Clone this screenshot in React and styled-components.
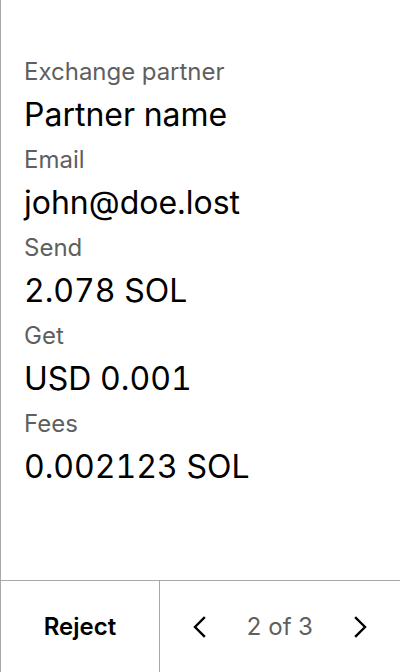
import React from "react";
import styled, { createGlobalStyle } from "styled-components";

const Global = createGlobalStyle`
  html, body { margin: 0; padding: 0; background: #fff; }
  body { font-family: Inter, "Noto Sans", sans-serif; -webkit-font-smoothing: antialiased; font-variant-numeric: tabular-nums; }
`;

const Screen = styled.div`
  width: 400px;
  height: 672px;
  box-sizing: border-box;
  border-left: 1px solid #a8a8a8;
  display: flex;
  flex-direction: column;
  background: #fff;
`;

const Details = styled.dl`
  flex: 1;
  margin: 0;
  padding: 56px 23px 0;
  display: flex;
  flex-direction: column;
  gap: 6px;
`;

const Field = styled.div`
  display: flex;
  flex-direction: column;
`;

const Label = styled.dt`
  font-size: 24px;
  line-height: 32px;
  color: #5f5f5f;
  margin: 0;
`;

const Value = styled.dd`
  font-size: 32px;
  line-height: 46px;
  color: #000;
  margin: 4px 0 0;
`;

const Footer = styled.div`
  height: 92px;
  border-top: 1px solid #a8a8a8;
  display: flex;
  box-sizing: border-box;
`;

const RejectButton = styled.button`
  width: 159px;
  border: none;
  border-right: 1px solid #a8a8a8;
  background: none;
  font-family: inherit;
  font-size: 24px;
  font-weight: 600;
  color: #000;
  padding: 0;
  cursor: pointer;
`;

const Pager = styled.div`
  flex: 1;
  display: flex;
  align-items: center;
  justify-content: space-between;
  padding: 0 16px;
`;

const NavButton = styled.button`
  width: 48px;
  height: 48px;
  border: none;
  background: none;
  padding: 0;
  display: flex;
  align-items: center;
  justify-content: center;
  color: #000;
  cursor: pointer;
`;

const PageText = styled.span`
  font-size: 24px;
  color: #5f5f5f;
`;

const Chevron = ({ dir }) => (
  <svg width="24" height="24" viewBox="0 0 24 24" fill="none" stroke="currentColor" strokeWidth="2.4" strokeLinecap="square" strokeLinejoin="miter">
    {dir === "left" ? <path d="M16 3 L7 12 L16 21" /> : <path d="M8 3 L17 12 L8 21" />}
  </svg>
);

const rows = [
  ["Exchange partner", "Partner name"],
  ["Email", "john@doe.lost"],
  ["Send", "2.078 SOL"],
  ["Get", "USD 0.001"],
  ["Fees", "0.002123 SOL"],
];

export default function App() {
  return (
    <>
      <Global />
      <Screen>
        <Details>
          {rows.map(([l, v]) => (
            <Field key={l}>
              <Label>{l}</Label>
              <Value>{v}</Value>
            </Field>
          ))}
        </Details>
        <Footer>
          <RejectButton>Reject</RejectButton>
          <Pager>
            <NavButton aria-label="Previous"><Chevron dir="left" /></NavButton>
            <PageText>2 of 3</PageText>
            <NavButton aria-label="Next"><Chevron dir="right" /></NavButton>
          </Pager>
        </Footer>
      </Screen>
    </>
  );
}
